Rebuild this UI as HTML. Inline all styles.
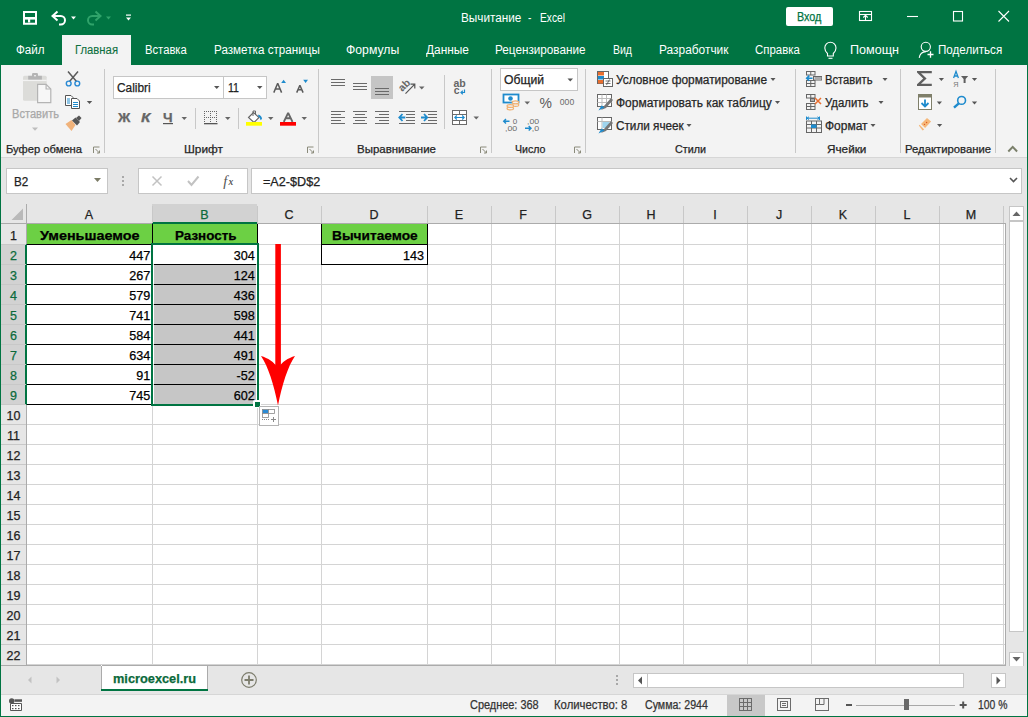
<!DOCTYPE html>
<html><head><meta charset="utf-8">
<style>
*{margin:0;padding:0;box-sizing:border-box}
html,body{width:1028px;height:717px;overflow:hidden;background:#fff;font-family:"Liberation Sans",sans-serif}
.a{position:absolute}
#title{left:0;top:0;width:1028px;height:35px;background:#007442}
#tabs{left:0;top:35px;width:1028px;height:30px;background:#007442}
#ribbon{left:1px;top:65px;width:1026px;height:93px;background:#f3f3f3;border-bottom:1px solid #d6d6d6}
#fbar{left:1px;top:158px;width:1026px;height:46px;background:#e6e6e6}
#colhdr{left:1px;top:204px;width:1004px;height:20px;background:#e6e6e6}
#grid{left:26px;top:224px;width:979px;height:441px;background:#fff}
#rowhdr{left:1px;top:224px;width:25px;height:441px;background:#e6e6e6}
#vsb{left:1005px;top:204px;width:22px;height:461px;background:#e6e6e6}
#sheets{left:1px;top:665px;width:1026px;height:29px;background:#e6e6e6}
#status{left:1px;top:694px;width:1026px;height:22px;background:#f3f3f3}
.lb{left:0;top:35px;width:1px;height:682px;background:#007442}
.rb{left:1027px;top:35px;width:1px;height:682px;background:#007442}
.bb{left:0;top:716px;width:1028px;height:1px;background:#007442}
.t{position:absolute;white-space:nowrap;line-height:1;-webkit-text-stroke:0.25px currentColor}
.w{color:#fff;font-size:12.5px}
</style></head><body>
<div id="title" class="a"></div>
<div id="tabs" class="a"></div>
<div id="ribbon" class="a"></div>
<div id="fbar" class="a"></div>
<div id="colhdr" class="a"></div>
<div id="rowhdr" class="a"></div>
<div id="grid" class="a"></div>
<div id="vsb" class="a"></div>
<div id="sheets" class="a"></div>
<div id="status" class="a"></div>


<!-- formula bar -->
<svg class="a" style="left:0;top:157px" width="1028" height="47" shape-rendering="crispEdges">
 <rect x="6.5" y="11.5" width="101" height="25" fill="#fff" stroke="#c6c6c6"></rect>
 <rect x="138.5" y="11.5" width="109" height="25" fill="#fff" stroke="#c6c6c6"></rect>
 <rect x="251.5" y="11.5" width="770" height="25" fill="#fff" stroke="#c6c6c6"></rect>
 <g fill="#a8a8a8"><rect x="122" y="19" width="2" height="2"></rect><rect x="122" y="23" width="2" height="2"></rect><rect x="122" y="27" width="2" height="2"></rect></g>
</svg>
<svg class="a" style="left:0;top:157px" width="1028" height="47">
 <path d="M94 21h7l-3.5 4z" fill="#7b7b66"></path>
 <path d="M152.5 19.5l9 9M161.5 19.5l-9 9" stroke="#c2c2c2" stroke-width="1.5" fill="none"></path>
 <path d="M188 24l3.5 4 7-8.5" stroke="#c2c2c2" stroke-width="2" fill="none"></path>
 <path d="M1010 21l3.5 3.5 3.5-3.5" stroke="#555" stroke-width="1.6" fill="none"></path>
 <text x="223.3" y="29" font-family="Liberation Serif" font-style="italic" font-size="14.5" fill="#555">f</text>
 <text x="228.6" y="28" font-family="Liberation Serif" font-style="italic" font-weight="bold" font-size="9.5" fill="#555">x</text>
</svg>
<span class="t" style="left: 13.6px; --b: 185.6px; --w: 14.3px; font-size: 12.5px; color: rgb(34, 34, 34); top: 175.6px; transform: scaleX(0.9348); transform-origin: 0px 0px;">B2</span>
<span class="t" style="left: 263.4px; --b: 185.6px; --w: 57.2px; font-size: 12.5px; color: rgb(34, 34, 34); top: 175.6px; transform: scaleX(1.0099); transform-origin: 0px 0px;">=A2-$D$2</span>

<svg class="a" style="left:0;top:0" width="1028" height="717" shape-rendering="crispEdges">
<rect x="1" y="204" width="1004" height="19" fill="#e6e6e6"></rect>
<rect x="152" y="204" width="105" height="19" fill="#d2d2d2"></rect>
<rect x="1" y="224" width="25" height="441" fill="#e6e6e6"></rect>
<rect x="1" y="244" width="24" height="160" fill="#d2d2d2"></rect>
<rect x="1" y="223" width="1004" height="1" fill="#ababab"></rect>
<rect x="152" y="222" width="105" height="2" fill="#007442"></rect>
<rect x="26" y="204" width="1" height="461" fill="#ababab"></rect>
<rect x="25" y="244" width="2" height="161" fill="#007442"></rect>
<rect x="152" y="206" width="1" height="17" fill="#c8c8c8"></rect>
<rect x="257" y="206" width="1" height="17" fill="#c8c8c8"></rect>
<rect x="321" y="206" width="1" height="17" fill="#c8c8c8"></rect>
<rect x="427" y="206" width="1" height="17" fill="#c8c8c8"></rect>
<rect x="491" y="206" width="1" height="17" fill="#c8c8c8"></rect>
<rect x="555" y="206" width="1" height="17" fill="#c8c8c8"></rect>
<rect x="619" y="206" width="1" height="17" fill="#c8c8c8"></rect>
<rect x="683" y="206" width="1" height="17" fill="#c8c8c8"></rect>
<rect x="747" y="206" width="1" height="17" fill="#c8c8c8"></rect>
<rect x="811" y="206" width="1" height="17" fill="#c8c8c8"></rect>
<rect x="875" y="206" width="1" height="17" fill="#c8c8c8"></rect>
<rect x="939" y="206" width="1" height="17" fill="#c8c8c8"></rect>
<rect x="1003" y="206" width="1" height="17" fill="#c8c8c8"></rect>
<rect x="1" y="244" width="25" height="1" fill="#c8c8c8"></rect>
<rect x="1" y="264" width="25" height="1" fill="#c8c8c8"></rect>
<rect x="1" y="284" width="25" height="1" fill="#c8c8c8"></rect>
<rect x="1" y="304" width="25" height="1" fill="#c8c8c8"></rect>
<rect x="1" y="324" width="25" height="1" fill="#c8c8c8"></rect>
<rect x="1" y="344" width="25" height="1" fill="#c8c8c8"></rect>
<rect x="1" y="364" width="25" height="1" fill="#c8c8c8"></rect>
<rect x="1" y="384" width="25" height="1" fill="#c8c8c8"></rect>
<rect x="1" y="404" width="25" height="1" fill="#c8c8c8"></rect>
<rect x="1" y="424" width="25" height="1" fill="#c8c8c8"></rect>
<rect x="1" y="444" width="25" height="1" fill="#c8c8c8"></rect>
<rect x="1" y="464" width="25" height="1" fill="#c8c8c8"></rect>
<rect x="1" y="484" width="25" height="1" fill="#c8c8c8"></rect>
<rect x="1" y="504" width="25" height="1" fill="#c8c8c8"></rect>
<rect x="1" y="524" width="25" height="1" fill="#c8c8c8"></rect>
<rect x="1" y="544" width="25" height="1" fill="#c8c8c8"></rect>
<rect x="1" y="564" width="25" height="1" fill="#c8c8c8"></rect>
<rect x="1" y="584" width="25" height="1" fill="#c8c8c8"></rect>
<rect x="1" y="604" width="25" height="1" fill="#c8c8c8"></rect>
<rect x="1" y="624" width="25" height="1" fill="#c8c8c8"></rect>
<rect x="1" y="644" width="25" height="1" fill="#c8c8c8"></rect>
<rect x="152" y="224" width="1" height="441" fill="#d4d4d4"></rect>
<rect x="257" y="224" width="1" height="441" fill="#d4d4d4"></rect>
<rect x="321" y="224" width="1" height="441" fill="#d4d4d4"></rect>
<rect x="427" y="224" width="1" height="441" fill="#d4d4d4"></rect>
<rect x="491" y="224" width="1" height="441" fill="#d4d4d4"></rect>
<rect x="555" y="224" width="1" height="441" fill="#d4d4d4"></rect>
<rect x="619" y="224" width="1" height="441" fill="#d4d4d4"></rect>
<rect x="683" y="224" width="1" height="441" fill="#d4d4d4"></rect>
<rect x="747" y="224" width="1" height="441" fill="#d4d4d4"></rect>
<rect x="811" y="224" width="1" height="441" fill="#d4d4d4"></rect>
<rect x="875" y="224" width="1" height="441" fill="#d4d4d4"></rect>
<rect x="939" y="224" width="1" height="441" fill="#d4d4d4"></rect>
<rect x="1003" y="224" width="1" height="441" fill="#d4d4d4"></rect>
<rect x="27" y="244" width="978" height="1" fill="#d4d4d4"></rect>
<rect x="27" y="264" width="978" height="1" fill="#d4d4d4"></rect>
<rect x="27" y="284" width="978" height="1" fill="#d4d4d4"></rect>
<rect x="27" y="304" width="978" height="1" fill="#d4d4d4"></rect>
<rect x="27" y="324" width="978" height="1" fill="#d4d4d4"></rect>
<rect x="27" y="344" width="978" height="1" fill="#d4d4d4"></rect>
<rect x="27" y="364" width="978" height="1" fill="#d4d4d4"></rect>
<rect x="27" y="384" width="978" height="1" fill="#d4d4d4"></rect>
<rect x="27" y="404" width="978" height="1" fill="#d4d4d4"></rect>
<rect x="27" y="424" width="978" height="1" fill="#d4d4d4"></rect>
<rect x="27" y="444" width="978" height="1" fill="#d4d4d4"></rect>
<rect x="27" y="464" width="978" height="1" fill="#d4d4d4"></rect>
<rect x="27" y="484" width="978" height="1" fill="#d4d4d4"></rect>
<rect x="27" y="504" width="978" height="1" fill="#d4d4d4"></rect>
<rect x="27" y="524" width="978" height="1" fill="#d4d4d4"></rect>
<rect x="27" y="544" width="978" height="1" fill="#d4d4d4"></rect>
<rect x="27" y="564" width="978" height="1" fill="#d4d4d4"></rect>
<rect x="27" y="584" width="978" height="1" fill="#d4d4d4"></rect>
<rect x="27" y="604" width="978" height="1" fill="#d4d4d4"></rect>
<rect x="27" y="624" width="978" height="1" fill="#d4d4d4"></rect>
<rect x="27" y="644" width="978" height="1" fill="#d4d4d4"></rect>
<rect x="27" y="664" width="978" height="1" fill="#d4d4d4"></rect>
<rect x="1005" y="223" width="1" height="443" fill="#ababab"></rect>
<rect x="1" y="665" width="1005" height="1" fill="#ababab"></rect>
<rect x="27" y="224" width="125" height="20" fill="#6cd044"></rect>
<rect x="153" y="224" width="104" height="20" fill="#6cd044"></rect>
<rect x="322" y="224" width="105" height="20" fill="#6cd044"></rect>
<rect x="154" y="265" width="102" height="139" fill="#c6c6c6"></rect>
<rect x="27" y="244" width="125" height="1" fill="#000"></rect>
<rect x="27" y="264" width="124" height="1" fill="#000"></rect><rect x="154" y="264" width="102" height="1" fill="#000"></rect>
<rect x="27" y="284" width="124" height="1" fill="#000"></rect><rect x="154" y="284" width="102" height="1" fill="#000"></rect>
<rect x="27" y="304" width="124" height="1" fill="#000"></rect><rect x="154" y="304" width="102" height="1" fill="#000"></rect>
<rect x="27" y="324" width="124" height="1" fill="#000"></rect><rect x="154" y="324" width="102" height="1" fill="#000"></rect>
<rect x="27" y="344" width="124" height="1" fill="#000"></rect><rect x="154" y="344" width="102" height="1" fill="#000"></rect>
<rect x="27" y="364" width="124" height="1" fill="#000"></rect><rect x="154" y="364" width="102" height="1" fill="#000"></rect>
<rect x="27" y="384" width="124" height="1" fill="#000"></rect><rect x="154" y="384" width="102" height="1" fill="#000"></rect>
<rect x="27" y="404" width="124" height="1" fill="#000"></rect><rect x="154" y="404" width="102" height="1" fill="#000"></rect>
<rect x="152" y="224" width="1" height="181" fill="#000"></rect>
<rect x="257" y="224" width="1" height="181" fill="#000"></rect>

<rect x="321" y="244" width="107" height="1" fill="#000"></rect>
<rect x="321" y="264" width="107" height="1" fill="#000"></rect>
<rect x="321" y="224" width="1" height="41" fill="#000"></rect>
<rect x="427" y="224" width="1" height="41" fill="#000"></rect>
<rect x="151" y="243" width="108" height="2" fill="#007442"></rect>
<rect x="151" y="404" width="102" height="2" fill="#007442"></rect>
<rect x="151" y="243" width="2" height="163" fill="#007442"></rect>
<rect x="257" y="243" width="2" height="157" fill="#007442"></rect>
<rect x="253" y="400" width="8" height="8" fill="#fff"></rect>
<rect x="255" y="402" width="5" height="5" fill="#007442"></rect>
</svg>
<svg class="a" style="left:0;top:0" width="1028" height="717">
<path d="M11.5 220h11.5v-11.5z" fill="#b9b9b9"></path>
</svg>
<span class="t" style="left: 26px; width: 126px; text-align: center; --b: 219.3px; font-size: 12.5px; color: rgb(34, 34, 34); top: 209.3px;">A</span>
<span class="t" style="left: 152px; width: 105px; text-align: center; --b: 219.3px; font-size: 12.5px; color: rgb(11, 106, 59); top: 209.3px;">B</span>
<span class="t" style="left: 257px; width: 64px; text-align: center; --b: 219.3px; font-size: 12.5px; color: rgb(34, 34, 34); top: 209.3px;">C</span>
<span class="t" style="left: 321px; width: 106px; text-align: center; --b: 219.3px; font-size: 12.5px; color: rgb(34, 34, 34); top: 209.3px;">D</span>
<span class="t" style="left: 427px; width: 64px; text-align: center; --b: 219.3px; font-size: 12.5px; color: rgb(34, 34, 34); top: 209.3px;">E</span>
<span class="t" style="left: 491px; width: 64px; text-align: center; --b: 219.3px; font-size: 12.5px; color: rgb(34, 34, 34); top: 209.3px;">F</span>
<span class="t" style="left: 555px; width: 64px; text-align: center; --b: 219.3px; font-size: 12.5px; color: rgb(34, 34, 34); top: 209.3px;">G</span>
<span class="t" style="left: 619px; width: 64px; text-align: center; --b: 219.3px; font-size: 12.5px; color: rgb(34, 34, 34); top: 209.3px;">H</span>
<span class="t" style="left: 683px; width: 64px; text-align: center; --b: 219.3px; font-size: 12.5px; color: rgb(34, 34, 34); top: 209.3px;">I</span>
<span class="t" style="left: 747px; width: 64px; text-align: center; --b: 219.3px; font-size: 12.5px; color: rgb(34, 34, 34); top: 209.3px;">J</span>
<span class="t" style="left: 811px; width: 64px; text-align: center; --b: 219.3px; font-size: 12.5px; color: rgb(34, 34, 34); top: 209.3px;">K</span>
<span class="t" style="left: 875px; width: 64px; text-align: center; --b: 219.3px; font-size: 12.5px; color: rgb(34, 34, 34); top: 209.3px;">L</span>
<span class="t" style="left: 939px; width: 64px; text-align: center; --b: 219.3px; font-size: 12.5px; color: rgb(34, 34, 34); top: 209.3px;">M</span>
<span class="t" style="left: 1px; width: 25px; text-align: center; --b: 239.5px; font-size: 12.5px; color: rgb(34, 34, 34); top: 229.5px;">1</span>
<span class="t" style="left: 1px; width: 25px; text-align: center; --b: 259.5px; font-size: 12.5px; color: rgb(11, 106, 59); top: 249.5px;">2</span>
<span class="t" style="left: 1px; width: 25px; text-align: center; --b: 279.5px; font-size: 12.5px; color: rgb(11, 106, 59); top: 269.5px;">3</span>
<span class="t" style="left: 1px; width: 25px; text-align: center; --b: 299.5px; font-size: 12.5px; color: rgb(11, 106, 59); top: 289.5px;">4</span>
<span class="t" style="left: 1px; width: 25px; text-align: center; --b: 319.5px; font-size: 12.5px; color: rgb(11, 106, 59); top: 309.5px;">5</span>
<span class="t" style="left: 1px; width: 25px; text-align: center; --b: 339.5px; font-size: 12.5px; color: rgb(11, 106, 59); top: 329.5px;">6</span>
<span class="t" style="left: 1px; width: 25px; text-align: center; --b: 359.5px; font-size: 12.5px; color: rgb(11, 106, 59); top: 349.5px;">7</span>
<span class="t" style="left: 1px; width: 25px; text-align: center; --b: 379.5px; font-size: 12.5px; color: rgb(11, 106, 59); top: 369.5px;">8</span>
<span class="t" style="left: 1px; width: 25px; text-align: center; --b: 399.5px; font-size: 12.5px; color: rgb(11, 106, 59); top: 389.5px;">9</span>
<span class="t" style="left: 1px; width: 25px; text-align: center; --b: 419.5px; font-size: 12.5px; color: rgb(34, 34, 34); top: 409.5px;">10</span>
<span class="t" style="left: 1px; width: 25px; text-align: center; --b: 439.5px; font-size: 12.5px; color: rgb(34, 34, 34); top: 429.5px;">11</span>
<span class="t" style="left: 1px; width: 25px; text-align: center; --b: 459.5px; font-size: 12.5px; color: rgb(34, 34, 34); top: 449.5px;">12</span>
<span class="t" style="left: 1px; width: 25px; text-align: center; --b: 479.5px; font-size: 12.5px; color: rgb(34, 34, 34); top: 469.5px;">13</span>
<span class="t" style="left: 1px; width: 25px; text-align: center; --b: 499.5px; font-size: 12.5px; color: rgb(34, 34, 34); top: 489.5px;">14</span>
<span class="t" style="left: 1px; width: 25px; text-align: center; --b: 519.5px; font-size: 12.5px; color: rgb(34, 34, 34); top: 509.5px;">15</span>
<span class="t" style="left: 1px; width: 25px; text-align: center; --b: 539.5px; font-size: 12.5px; color: rgb(34, 34, 34); top: 529.5px;">16</span>
<span class="t" style="left: 1px; width: 25px; text-align: center; --b: 559.5px; font-size: 12.5px; color: rgb(34, 34, 34); top: 549.5px;">17</span>
<span class="t" style="left: 1px; width: 25px; text-align: center; --b: 579.5px; font-size: 12.5px; color: rgb(34, 34, 34); top: 569.5px;">18</span>
<span class="t" style="left: 1px; width: 25px; text-align: center; --b: 599.5px; font-size: 12.5px; color: rgb(34, 34, 34); top: 589.5px;">19</span>
<span class="t" style="left: 1px; width: 25px; text-align: center; --b: 619.5px; font-size: 12.5px; color: rgb(34, 34, 34); top: 609.5px;">20</span>
<span class="t" style="left: 1px; width: 25px; text-align: center; --b: 639.5px; font-size: 12.5px; color: rgb(34, 34, 34); top: 629.5px;">21</span>
<span class="t" style="left: 1px; width: 25px; text-align: center; --b: 659.5px; font-size: 12.5px; color: rgb(34, 34, 34); top: 649.5px;">22</span>
<span class="t" style="left: 27px; width: 123.2px; text-align: right; --b: 260px; font-size: 12.6px; color: rgb(0, 0, 0); top: 250px;">447</span>
<span class="t" style="left: 153px; width: 101.8px; text-align: right; --b: 260px; font-size: 12.6px; color: rgb(0, 0, 0); top: 250px;">304</span>
<span class="t" style="left: 27px; width: 123.2px; text-align: right; --b: 280px; font-size: 12.6px; color: rgb(0, 0, 0); top: 270px;">267</span>
<span class="t" style="left: 153px; width: 101.8px; text-align: right; --b: 280px; font-size: 12.6px; color: rgb(0, 0, 0); top: 270px;">124</span>
<span class="t" style="left: 27px; width: 123.2px; text-align: right; --b: 300px; font-size: 12.6px; color: rgb(0, 0, 0); top: 290px;">579</span>
<span class="t" style="left: 153px; width: 101.8px; text-align: right; --b: 300px; font-size: 12.6px; color: rgb(0, 0, 0); top: 290px;">436</span>
<span class="t" style="left: 27px; width: 123.2px; text-align: right; --b: 320px; font-size: 12.6px; color: rgb(0, 0, 0); top: 310px;">741</span>
<span class="t" style="left: 153px; width: 101.8px; text-align: right; --b: 320px; font-size: 12.6px; color: rgb(0, 0, 0); top: 310px;">598</span>
<span class="t" style="left: 27px; width: 123.2px; text-align: right; --b: 340px; font-size: 12.6px; color: rgb(0, 0, 0); top: 330px;">584</span>
<span class="t" style="left: 153px; width: 101.8px; text-align: right; --b: 340px; font-size: 12.6px; color: rgb(0, 0, 0); top: 330px;">441</span>
<span class="t" style="left: 27px; width: 123.2px; text-align: right; --b: 360px; font-size: 12.6px; color: rgb(0, 0, 0); top: 350px;">634</span>
<span class="t" style="left: 153px; width: 101.8px; text-align: right; --b: 360px; font-size: 12.6px; color: rgb(0, 0, 0); top: 350px;">491</span>
<span class="t" style="left: 27px; width: 123.2px; text-align: right; --b: 380px; font-size: 12.6px; color: rgb(0, 0, 0); top: 370px;">91</span>
<span class="t" style="left: 153px; width: 101.8px; text-align: right; --b: 380px; font-size: 12.6px; color: rgb(0, 0, 0); top: 370px;">-52</span>
<span class="t" style="left: 27px; width: 123.2px; text-align: right; --b: 400px; font-size: 12.6px; color: rgb(0, 0, 0); top: 390px;">745</span>
<span class="t" style="left: 153px; width: 101.8px; text-align: right; --b: 400px; font-size: 12.6px; color: rgb(0, 0, 0); top: 390px;">602</span>
<span class="t" style="left: 322px; width: 102px; text-align: right; --b: 260px; font-size: 12.6px; color: rgb(0, 0, 0); top: 250px;">143</span>
<span class="t" style="left: 39.7px; --w: 99.6px; --b: 240px; font-size: 13.5px; color: rgb(0, 0, 0); font-weight: bold; top: 229px; transform: scaleX(1.0672); transform-origin: 0px 0px;">Уменьшаемое</span>
<span class="t" style="left: 175px; --w: 61.5px; --b: 240px; font-size: 13.5px; color: rgb(0, 0, 0); font-weight: bold; top: 229px; transform: scaleX(0.9942); transform-origin: 0px 0px;">Разность</span>
<span class="t" style="left: 332px; --w: 85.7px; --b: 240px; font-size: 13.5px; color: rgb(0, 0, 0); font-weight: bold; top: 229px; transform: scaleX(1.015); transform-origin: 0px 0px;">Вычитаемое</span>

<!-- arrow & quick analysis -->
<svg class="a" style="left:0;top:0" width="1028" height="717">
 <rect x="275.3" y="244" width="5.6" height="136" fill="#ff0000"></rect>
 <path d="M278 405.5C274 385 268 366 261 356C268 358 274 362 278 368C282 362 288 358 295 356C288 366 282 385 278 405.5z" fill="#ff0000"></path>
 <rect x="259.5" y="406.5" width="19" height="19" fill="#fff" stroke="#b4b4b4"></rect>
 <rect x="262.5" y="409.5" width="6" height="4" fill="#2a8ad4" stroke="#8a8a8a" stroke-width="0.8"></rect>
 <rect x="268.5" y="409.5" width="6" height="4" fill="#fff" stroke="#8a8a8a" stroke-width="0.8"></rect>
 <rect x="262.5" y="413.5" width="6" height="4" fill="#fff" stroke="#8a8a8a" stroke-width="0.8"></rect>
 <path d="M262 419.5h7" stroke="#8a8a8a" stroke-dasharray="1 1" stroke-width="1"></path>
 <path d="M271 419.5h5M273.5 417v5" stroke="#8a8a8a" stroke-width="1"></path>
</svg>
<!-- scrollbars, sheet tabs, status -->
<svg class="a" style="left:0;top:0" width="1028" height="717" shape-rendering="crispEdges">
 <rect x="1006" y="204" width="21" height="461" fill="#e6e6e6"></rect>
 <rect x="1009.5" y="206.5" width="14" height="14" fill="#fff" stroke="#c6c6c6"></rect>
 <rect x="1009.5" y="221.5" width="14" height="410" fill="#fff" stroke="#c6c6c6"></rect>
 <rect x="1009.5" y="652.5" width="14" height="14" fill="#fff" stroke="#c6c6c6"></rect>
 <rect x="1" y="666" width="1026" height="28" fill="#e6e6e6"></rect>
 <rect x="1" y="694" width="1026" height="1" fill="#d6d6d6"></rect>
 <rect x="1" y="695" width="1026" height="21" fill="#f3f3f3"></rect>
 <path d="M101.5 691V665.5H207.5V691" fill="#fff" stroke="#ababab"></path>
 <rect x="101" y="665" width="1" height="1" fill="#fff"></rect>
 <rect x="101" y="689" width="107" height="2" fill="#007442"></rect>
 <rect x="633.5" y="673.5" width="14" height="14" fill="#fff" stroke="#c6c6c6"></rect>
 <rect x="647.5" y="673.5" width="316" height="14" fill="#fff" stroke="#c6c6c6"></rect>
 <rect x="991.5" y="673.5" width="14" height="14" fill="#fff" stroke="#c6c6c6"></rect>
 <g fill="#a8a8a8"><rect x="616" y="675" width="2" height="2"></rect><rect x="616" y="679" width="2" height="2"></rect><rect x="616" y="683" width="2" height="2"></rect></g>
 <rect x="727" y="695" width="38" height="21" fill="#c8c8c8"></rect>
 <rect x="0" y="716" width="1028" height="1" fill="#007442"></rect>
</svg>
<svg class="a" style="left:0;top:0" width="1028" height="717">
 <path d="M1012.5 216h8l-4-4.5z" fill="#666"></path>
 <path d="M1012.5 657h8l-4 4.5z" fill="#666"></path>
 <path d="M638 680.5l4-4v8z" fill="#555"></path>
 <path d="M1000.5 680.5l-4-4v8z" fill="#555"></path>
 <path d="M31.5 676.5l-3.5 3.5 3.5 3.5z" fill="#c2c2c2"></path>
 <path d="M56.5 676.5l3.5 3.5-3.5 3.5z" fill="#c2c2c2"></path>
 <circle cx="249" cy="680" r="7.3" fill="none" stroke="#7d7d6d" stroke-width="1.2"></circle>
 <path d="M249 675.5v9M244.5 680h9" stroke="#7d7d6d" stroke-width="1.8"></path>
 <circle cx="11.7" cy="701" r="2.7" fill="#555"></circle>
 <path d="M10.5 703.5h11v7h-11z" fill="#fff" stroke="#555" stroke-width="1"></path>
 <rect x="14.5" y="699.3" width="7.5" height="2.5" fill="#555"></rect>
 <g fill="#555"><rect x="12" y="705" width="1.5" height="1.2"></rect><rect x="15" y="705" width="1.5" height="1.2"></rect><rect x="18" y="705" width="1.5" height="1.2"></rect><rect x="12" y="708" width="1.5" height="1.2"></rect><rect x="15" y="708" width="1.5" height="1.2"></rect><rect x="18" y="708" width="1.5" height="1.2"></rect></g>
 <g fill="none" stroke="#6b6b6b" stroke-width="1">
  <rect x="739.5" y="698.5" width="12" height="12"></rect><path d="M739.5 702.5h12M739.5 706.5h12M743.5 698.5v12M747.5 698.5v12"></path>
  <rect x="777.5" y="698.5" width="13" height="12"></rect><rect x="780.5" y="701.5" width="7" height="6"></rect><path d="M782 703.5h4M782 705.5h4"></path>
  <rect x="815.5" y="698.5" width="13" height="12"></rect><path d="M819.5 698.5v6h4.5v-6M815.5 704.5h4"></path>
 </g>
 <rect x="846" y="704" width="6" height="2" fill="#555"></rect>
 <rect x="856" y="705" width="99" height="1" fill="#a8a8a8"></rect>
 <rect x="904" y="699" width="5" height="11" fill="#6a6a6a"></rect>
 <rect x="959.7" y="704" width="7" height="2" fill="#555"></rect><rect x="962.2" y="701.5" width="2" height="7" fill="#555"></rect>
</svg>
<span class="t" style="left: 112.8px; --b: 683.4px; --w: 83.1px; font-size: 13px; color: rgb(11, 106, 59); font-weight: bold; top: 672.4px; transform: scaleX(0.9829); transform-origin: 0px 0px;">microexcel.ru</span>
<span class="t" style="left: 469.6px; --b: 709.2px; --w: 68.6px; font-size: 12px; color: rgb(51, 51, 51); top: 699.2px; transform: scaleX(0.9096); transform-origin: 0px 0px;">Среднее: 368</span>
<span class="t" style="left: 554.2px; --b: 709.2px; --w: 73.4px; font-size: 12px; color: rgb(51, 51, 51); top: 699.2px; transform: scaleX(0.9435); transform-origin: 0px 0px;">Количество: 8</span>
<span class="t" style="left: 644.5px; --b: 709.2px; --w: 62.9px; font-size: 12px; color: rgb(51, 51, 51); top: 699.2px; transform: scaleX(0.8849); transform-origin: 0px 0px;">Сумма: 2944</span>
<span class="t" style="left: 978.2px; --b: 709.2px; --w: 29.4px; font-size: 12px; color: rgb(51, 51, 51); top: 699.2px; transform: scaleX(0.8639); transform-origin: 0px 0px;">100 %</span>

<!-- ribbon -->
<svg class="a" style="left:0;top:0" width="1028" height="160">
 <!-- separators -->
 <g fill="#c8c8c8">
  <rect x="104" y="69" width="1" height="84"></rect>
  <rect x="318" y="69" width="1" height="84"></rect>
  <rect x="491" y="69" width="1" height="84"></rect>
  <rect x="585" y="69" width="1" height="84"></rect>
  <rect x="795" y="69" width="1" height="84"></rect>
  <rect x="900" y="69" width="1" height="84"></rect>
  <rect x="995" y="69" width="1" height="84"></rect>
  <rect x="195" y="108" width="1" height="21"></rect>
  <rect x="238" y="108" width="1" height="21"></rect>
  <rect x="444" y="75" width="1" height="54"></rect>
 </g>
 <!-- launchers -->
 <g fill="none" stroke="#8a8a7a" stroke-width="1">
  <path d="M93.5 153v-6h6"></path><path d="M95.5 149l4 4M99.5 150.5v2.5h-2.5"></path>
  <path d="M307.5 153v-6h6"></path><path d="M309.5 149l4 4M313.5 150.5v2.5h-2.5"></path>
  <path d="M480.5 153v-6h6"></path><path d="M482.5 149l4 4M486.5 150.5v2.5h-2.5"></path>
  <path d="M574.5 153v-6h6"></path><path d="M576.5 149l4 4M580.5 150.5v2.5h-2.5"></path>
 </g>
 <!-- collapse ribbon -->
 <path d="M1008.3 151.5l4.4-4.6 4.4 4.6" fill="none" stroke="#7a7f6a" stroke-width="2"></path>
 <!-- paste (disabled) -->
 <rect x="23" y="75.8" width="23.7" height="25" rx="1.5" fill="#dcdcd9"></rect>
 <rect x="28.2" y="75.8" width="13.7" height="4" fill="#b5b5b5"></rect>
 <rect x="32" y="73" width="6" height="3.5" rx="1.2" fill="#b5b5b5"></rect>
 <rect x="34.2" y="75" width="1.6" height="1.4" fill="#f3f3f3"></rect>
 <rect x="23" y="79.8" width="23.7" height="1.3" fill="#f3f3f3"></rect>
 <path d="M37.6 84.3h8.5l4.7 4.7v13.6h-13.2z" fill="#f7f7f7" stroke="#b4b4b4" stroke-width="1.2"></path>
 <path d="M46.1 84.3v4.7h4.7" fill="none" stroke="#b4b4b4" stroke-width="1.2"></path>
 <path d="M32 127.5h6l-3 3.2z" fill="#bdbdbd"></path>
 <!-- scissors -->
 <g fill="none" stroke="#5a5a5a" stroke-width="1.5"><path d="M68 71.5l8.5 10M78 71.5l-8.5 10"></path></g>
 <g fill="none" stroke="#2a8ad4" stroke-width="1.4"><circle cx="68.7" cy="83.5" r="2.4"></circle><circle cx="77.3" cy="83.5" r="2.4"></circle></g>
 <!-- copy -->
 <path d="M65.5 95.5h5.5l2 2v8h-7.5z" fill="#fff" stroke="#555" stroke-width="1"></path>
 <path d="M71.5 98.5h5.5l2.5 2.5v7.5h-8z" fill="#fff" stroke="#555" stroke-width="1"></path>
 <g fill="#1e8bcd"><rect x="67" y="98.5" width="3" height="1"></rect><rect x="67" y="100.5" width="3" height="1"></rect><rect x="67" y="102.5" width="3" height="1"></rect><rect x="73" y="102" width="5" height="1"></rect><rect x="73" y="104" width="5" height="1"></rect><rect x="73" y="106" width="5" height="1"></rect></g>
 <path d="M86.8 101h5.4l-2.7 3z" fill="#555"></path>
 <!-- format painter -->
 <path d="M65.5 124l6-4 4 5-4 6z" fill="#f0b27a"></path>
 <path d="M72 120.5l3.5-3 4.5 4.5-3 3.5z" fill="#555"></path>
 <path d="M76 118l3-2.5 2.5 2.5-2.5 3z" fill="#555"></path>
 <!-- font boxes -->
 <rect x="113.5" y="76.5" width="110" height="22" fill="#fff" stroke="#c6c6c6"></rect>
 <rect x="223.5" y="76.5" width="43" height="22" fill="#fff" stroke="#c6c6c6"></rect>
 <path d="M214 86h5.5l-2.75 3z" fill="#555"></path>
 <path d="M257 86h5.5l-2.75 3z" fill="#555"></path>
 <path d="M281.2 82.9h4.8l-2.4-3.1z" fill="#1e8bcd"></path>
 <path d="M273.8 92.6l3.9-9.4 3.9 9.4M275.3 89h4.8" fill="none" stroke="#5a5a5a" stroke-width="1.5" stroke-linejoin="bevel"></path>
 <path d="M303.2 79.8h4.8l-2.4 3.1z" fill="#1e8bcd"></path>
 <path d="M296.7 92.6l3.2-7.4 3.2 7.4M297.9 89.8h4" fill="none" stroke="#5a5a5a" stroke-width="1.5" stroke-linejoin="bevel"></path>
 <!-- BIU arrows -->
 <path d="M181.5 117h5.5l-2.75 3z" fill="#666"></path>
 <rect x="163" y="123" width="10" height="1.2" fill="#555"></rect>
 <!-- borders icon -->
 <g fill="#666">
  <path d="M204 111h1v1h-1zM206 111h1v1h-1zM208 111h1v1h-1zM210 111h1v1h-1zM212 111h1v1h-1zM214 111h1v1h-1zM216 111h1v1h-1z"></path>
  <path d="M204 117h1v1h-1zM206 117h1v1h-1zM208 117h1v1h-1zM210 117h1v1h-1zM212 117h1v1h-1zM214 117h1v1h-1zM216 117h1v1h-1z"></path>
  <path d="M204 113h1v1h-1zM204 115h1v1h-1zM204 119h1v1h-1zM204 121h1v1h-1zM210 113h1v1h-1zM210 115h1v1h-1zM210 119h1v1h-1zM210 121h1v1h-1zM216 113h1v1h-1zM216 115h1v1h-1zM216 119h1v1h-1zM216 121h1v1h-1z"></path>
 </g>
 <rect x="204" y="123" width="13.5" height="1.3" fill="#555"></rect>
 <path d="M225 117h5.5l-2.75 3z" fill="#666"></path>
 <!-- fill color -->
 <path d="M248.5 117.5l5-5 5.5 5-5 5z" fill="#fff" stroke="#666" stroke-width="1.1"></path>
 <path d="M253 116v-5h2.5v4" fill="none" stroke="#666" stroke-width="1"></path>
 <path d="M258.5 114.5c2 0.8 3.5 2.5 3.5 4.5l-1.5 1.3c0-1.5-1-3-2.5-4z" fill="#1e8bcd"></path>
 <rect x="246" y="122" width="16" height="3.7" fill="#ffff00"></rect>
 <path d="M268 117h5.5l-2.75 3z" fill="#666"></path>
 <!-- font color -->
 <path d="M283.8 121.8l4.35-9 4.35 9M285.6 118.3h5.1" fill="none" stroke="#666" stroke-width="1.9" stroke-linejoin="bevel"></path>
 <rect x="280" y="122" width="16" height="3.7" fill="#ff0000"></rect>
 <path d="M301.5 117h5.5l-2.75 3z" fill="#666"></path>
 <!-- alignment -->
 <g fill="#6a6a6a">
  <rect x="331" y="79" width="14" height="1"></rect><rect x="331" y="82" width="14" height="1"></rect><rect x="331" y="85" width="14" height="1"></rect>
  <rect x="353" y="83" width="14" height="1"></rect><rect x="353" y="86" width="14" height="1"></rect><rect x="353" y="89" width="14" height="1"></rect>
 </g>
 <rect x="371" y="76" width="22" height="23" fill="#c5c5c5"></rect>
 <g fill="#6a6a6a">
  <rect x="375" y="88" width="14" height="1"></rect><rect x="375" y="91" width="14" height="1"></rect><rect x="375" y="94" width="14" height="1"></rect>
 </g>
 <g fill="#6a6a6a">
  <rect x="331" y="111" width="14" height="1"></rect><rect x="331" y="114" width="10" height="1"></rect><rect x="331" y="117" width="14" height="1"></rect><rect x="331" y="120" width="10" height="1"></rect><rect x="331" y="123" width="14" height="1"></rect>
  <rect x="353" y="111" width="14" height="1"></rect><rect x="355" y="114" width="10" height="1"></rect><rect x="353" y="117" width="14" height="1"></rect><rect x="355" y="120" width="10" height="1"></rect><rect x="353" y="123" width="14" height="1"></rect>
  <rect x="375" y="111" width="14" height="1"></rect><rect x="379" y="114" width="10" height="1"></rect><rect x="375" y="117" width="14" height="1"></rect><rect x="379" y="120" width="10" height="1"></rect><rect x="375" y="123" width="14" height="1"></rect>
  <rect x="399" y="111" width="16" height="1"></rect><rect x="406" y="114" width="9" height="1"></rect><rect x="406" y="117" width="9" height="1"></rect><rect x="406" y="120" width="9" height="1"></rect><rect x="399" y="123" width="16" height="1"></rect>
  <rect x="421" y="111" width="16" height="1"></rect><rect x="428" y="114" width="9" height="1"></rect><rect x="428" y="117" width="9" height="1"></rect><rect x="428" y="120" width="9" height="1"></rect><rect x="421" y="123" width="16" height="1"></rect>
 </g>
 <path d="M402.5 114l-3.2 3.5 3.2 3.5M399.8 117.5h5.5" fill="none" stroke="#1e8bcd" stroke-width="1.8"></path>
 <path d="M424 114l3.2 3.5-3.2 3.5M421 117.5h5.5" fill="none" stroke="#1e8bcd" stroke-width="1.8"></path>
 <!-- orientation -->
 <text x="399" y="92" font-family="Liberation Sans" font-size="10.5" font-weight="bold" fill="#666" transform="translate(2 -1) rotate(-45 401 91)">ab</text>
 <path d="M405.5 93.7l9.3-9.5M410.5 84.2h4.3v4.3" fill="none" stroke="#555" stroke-width="1.2"></path>
 <path d="M419 86.5h5.5l-2.75 3z" fill="#666"></path>
 <!-- wrap text -->
 <text x="453.5" y="86.6" font-family="Liberation Sans" font-size="10.5" font-weight="bold" fill="#666" textLength="12.3" lengthAdjust="spacingAndGlyphs">ab</text>
 <text x="453.8" y="93.6" font-family="Liberation Sans" font-size="10.5" font-weight="bold" fill="#666">c</text>
 <path d="M464.5 89.5v3h-3.5M462.8 90.8l-1.8 1.7 1.8 1.7" fill="none" stroke="#1e8bcd" stroke-width="1.2"></path>
 <!-- merge -->
 <rect x="452.5" y="110.5" width="14" height="14" fill="#fff" stroke="#6a6a6a"></rect>
 <path d="M452.5 114.5h14M452.5 120.5h14M459.5 110.5v4M459.5 120.5v4" stroke="#6a6a6a" fill="none"></path>
 <path d="M455 117.5h9M456.8 115.5l-2 2 2 2M462.2 115.5l2 2-2 2" stroke="#1e8bcd" fill="none" stroke-width="1.1"></path>
 <path d="M473.5 116.5h5.5l-2.75 3z" fill="#666"></path>
 <!-- number -->
 <rect x="500.5" y="68.5" width="77" height="22" fill="#fff" stroke="#c6c6c6"></rect>
 <path d="M567.5 78.5h5.5l-2.75 3z" fill="#555"></path>
 <rect x="503.5" y="94.5" width="15" height="8" fill="#fff" stroke="#1e8bcd" stroke-width="1.8"></rect>
 <circle cx="510.5" cy="98.5" r="2.3" fill="#1e8bcd"></circle>
 <g fill="#f3f3f3" stroke="#f0b070" stroke-width="1.1">
  <ellipse cx="515.5" cy="105" rx="3.3" ry="1.4"></ellipse><ellipse cx="515.5" cy="102.3" rx="3.3" ry="1.4"></ellipse>
  <ellipse cx="510.3" cy="108.5" rx="3.3" ry="1.4"></ellipse><ellipse cx="510.3" cy="106" rx="3.3" ry="1.4"></ellipse>
 </g>
 <path d="M524.5 101.5h5.5l-2.75 3z" fill="#666"></path>
 <text x="539.5" y="107.7" font-family="Liberation Sans" font-size="14.5" fill="#5a5a5a" textLength="12.4" lengthAdjust="spacingAndGlyphs">%</text>
 <text x="559.8" y="104.6" font-family="Liberation Sans" font-size="9" fill="#6a6a6a" textLength="14.4" lengthAdjust="spacingAndGlyphs">000</text>
 <text x="512.8" y="123.5" font-family="Liberation Sans" font-size="7.5" fill="#6a6a6a" textLength="4.5" lengthAdjust="spacingAndGlyphs">0</text>
 <text x="505" y="130.9" font-family="Liberation Sans" font-size="7.5" fill="#6a6a6a" textLength="12.3" lengthAdjust="spacingAndGlyphs">,00</text>
 <path d="M503.5 121.3h6M506 119l-2.3 2.3 2.3 2.3" stroke="#1e8bcd" fill="none" stroke-width="1.4"></path>
 <text x="527" y="123.5" font-family="Liberation Sans" font-size="7.5" fill="#6a6a6a" textLength="12.2" lengthAdjust="spacingAndGlyphs">,00</text>
 <text x="531.8" y="130.9" font-family="Liberation Sans" font-size="7.5" fill="#6a6a6a" textLength="7.4" lengthAdjust="spacingAndGlyphs">,0</text>
 <path d="M525 128.3h6M528.7 126l2.3 2.3-2.3 2.3" stroke="#1e8bcd" fill="none" stroke-width="1.4"></path>
 <!-- styles icons -->
 <rect x="597.5" y="71.5" width="11" height="12" fill="#fff" stroke="#666"></rect>
 <rect x="598" y="72" width="6" height="3.5" fill="#e86e2f"></rect>
 <rect x="598" y="76" width="6" height="3.5" fill="#1e8bcd"></rect>
 <rect x="598" y="80" width="6" height="3.5" fill="#e86e2f"></rect>
 <rect x="603.5" y="78.5" width="9" height="8" fill="#fff" stroke="#666"></rect>
 <path d="M605.5 81h5M605.5 83.5h5M609.5 79.5l-3 5.5" stroke="#555" fill="none" stroke-width="0.8"></path>
 <rect x="597.5" y="94.5" width="14" height="12" fill="#fff" stroke="#666"></rect>
 <path d="M597.5 98.5h14M597.5 102.5h14M602 94.5v12M606.5 94.5v12" stroke="#bbb" fill="none"></path>
 <path d="M601 110l3-4 7-8 2 2-7 8z" fill="#777"></path>
 <path d="M598.5 110.5l3-5 3 2z" fill="#1e8bcd"></path>
 <rect x="597.5" y="117.5" width="14" height="12" fill="#fff" stroke="#666"></rect>
 <path d="M597.5 121.5h14M602 117.5v12" stroke="#bbb" fill="none"></path>
 <rect x="602.5" y="122" width="7" height="6" fill="#9fd4ee"></rect>
 <path d="M601 133l3-4 7-8 2 2-7 8z" fill="#777"></path>
 <path d="M598.5 133.5l3-5 3 2z" fill="#1e8bcd"></path>
 <path d="M770.5 78h5l-2.5 3z" fill="#555"></path>
 <path d="M775 101h5l-2.5 3z" fill="#555"></path>
 <path d="M686.5 124h5l-2.5 3z" fill="#555"></path>
 <!-- cells icons -->
 <g fill="none" stroke="#666" stroke-width="1">
  <rect x="806.5" y="71.5" width="8.5" height="3.5"></rect><path d="M810.75 71.5v3.5"></path>
  <rect x="806.5" y="80.5" width="8.5" height="6"></rect><path d="M806.5 83.5h8.5M810.75 80.5v6"></path>
  <rect x="813.5" y="76.5" width="8" height="3.5"></rect>
  <rect x="806.5" y="94.5" width="8.5" height="3.5"></rect><path d="M810.75 94.5v3.5"></path>
  <rect x="806.5" y="103.5" width="8.5" height="6"></rect><path d="M806.5 106.5h8.5M810.75 103.5v6"></path>
  <rect x="806.5" y="121" width="15" height="11.5"></rect><path d="M806.5 124.5h15M806.5 128h15M811.5 121v11.5M816.5 121v11.5"></path>
 </g>
 <rect x="814.5" y="77" width="7" height="2.5" fill="#aaa"></rect>
 <rect x="810.5" y="98.5" width="4" height="3" fill="#aaa" stroke="#666" stroke-width="1"></rect>
 <path d="M806.5 78.2h6M809.3 75.6l-2.6 2.6 2.6 2.6" stroke="#1e8bcd" fill="none" stroke-width="1.6"></path>
 <path d="M815 98l6 6M821 98l-6 6" stroke="#e86e2f" fill="none" stroke-width="1.5"></path>
 <rect x="811" y="124.5" width="5.5" height="3.5" fill="#1e8bcd"></rect>
 <path d="M807 118.2h12M806.5 116.5v3.5M819.5 116.5v3.5M809 116.8l-2 1.4 2 1.4M817.5 116.8l2 1.4-2 1.4" stroke="#1e8bcd" fill="none" stroke-width="1"></path>
 <path d="M882.5 78h5l-2.5 3z" fill="#555"></path>
 <path d="M878.5 101h5l-2.5 3z" fill="#555"></path>
 <path d="M870.5 124h5l-2.5 3z" fill="#555"></path>
 <!-- editing -->
 <path d="M917 71h14.8v2.2h-10.8l5.6 5.3-5.6 5.2h10.8v2.2H917v-1.6l6.2-5.8-6.2-5.9z" fill="#5f5f5f"></path>
 <path d="M938.8 78h5.2l-2.6 2.9z" fill="#555"></path>
 <path d="M953.6 78l2.4-6.6 2.4 6.6M954.6 76h2.8" fill="none" stroke="#1e8bcd" stroke-width="1.3"></path>
 <text x="953.3" y="86.8" font-family="Liberation Sans" font-size="8" fill="#777" textLength="5.3" lengthAdjust="spacingAndGlyphs">Я</text>
 <path d="M961 76h7.2l-2.6 3v3.9h-2v-3.9z" fill="#5f5f5f"></path>
 <path d="M971.9 78h5.2l-2.6 2.9z" fill="#555"></path>
 <rect x="918.5" y="94.5" width="13" height="15" fill="#fff" stroke="#7f7f6a"></rect>
 <rect x="918.5" y="94.5" width="13" height="3" fill="#7f7f6a"></rect>
 <path d="M925 99.5v7M921.5 103l3.5 3.5 3.5-3.5" stroke="#1e8bcd" fill="none" stroke-width="1.8"></path>
 <path d="M936.8 101.5h5.2l-2.6 2.9z" fill="#555"></path>
 <circle cx="961.6" cy="100.4" r="3.9" fill="none" stroke="#1e8bcd" stroke-width="1.6"></circle>
 <path d="M958.8 103.3l-4.8 4.4" stroke="#1e8bcd" stroke-width="2.4"></path>
 <path d="M971.9 101.5h5.2l-2.6 2.9z" fill="#555"></path>
 <path d="M921 123.9l6-6 4.1 3.5-6 6.5z" fill="#f5b87a"></path>
 <path d="M918.8 125.6l0.8-0.8 4.6 4.6-1.6 1z" fill="#f5b87a"></path>
 <circle cx="926.6" cy="122.5" r="0.7" fill="#e05a20"></circle><circle cx="924.5" cy="124.4" r="0.7" fill="#e05a20"></circle>
 
 <path d="M937 124h5.2l-2.6 3z" fill="#555"></path>
</svg>

<span class="t" style="left: 11.8px; --b: 118.2px; --w: 47px; font-size: 12px; color: rgb(168, 168, 168); top: 108.2px; transform: scaleX(0.9238); transform-origin: 0px 0px;">Вставить</span>
<span class="t" style="left: 6.4px; --b: 153.2px; --w: 76px; font-size: 11px; color: rgb(38, 38, 38); top: 144.2px; transform: scaleX(1.0167); transform-origin: 0px 0px;">Буфер обмена</span>
<span class="t" style="left: 116.5px; --b: 91.6px; --w: 33.7px; font-size: 12.5px; color: rgb(34, 34, 34); top: 81.6px; transform: scaleX(0.951); transform-origin: 0px 0px;">Calibri</span>
<span class="t" style="left: 227.7px; --b: 91.6px; --w: 11px; font-size: 12.5px; color: rgb(34, 34, 34); top: 81.6px; transform: scaleX(0.8472); transform-origin: 0px 0px;">11</span>
<span class="t" style="left: 117.5px; --b: 121.7px; --w: 12.4px; font-size: 12px; color: rgb(102, 102, 102); font-weight: bold; top: 111.7px; transform: scaleX(1.1419); transform-origin: 0px 0px;">Ж</span>
<span class="t" style="left: 140.7px; --b: 121.7px; --w: 9.5px; font-size: 12px; color: rgb(102, 102, 102); font-weight: bold; font-style: italic; top: 111.7px; transform: scaleX(1.2854); transform-origin: 0px 0px;">К</span>
<span class="t" style="left: 163.3px; --b: 121.7px; --w: 9.6px; font-size: 12px; color: rgb(102, 102, 102); font-weight: bold; top: 111.7px; transform: scaleX(1.1378); transform-origin: 0px 0px;">Ч</span>
<span class="t" style="left: 184.3px; --b: 153.2px; --w: 39px; font-size: 11px; color: rgb(38, 38, 38); top: 144.2px; transform: scaleX(1.0773); transform-origin: 0px 0px;">Шрифт</span>
<span class="t" style="left: 357.3px; --b: 153.2px; --w: 79px; font-size: 11px; color: rgb(38, 38, 38); top: 144.2px; transform: scaleX(1.0433); transform-origin: 0px 0px;">Выравнивание</span>
<span class="t" style="left: 503.6px; --b: 83.5px; --w: 40px; font-size: 12.5px; color: rgb(34, 34, 34); top: 73.5px; transform: scaleX(0.9723); transform-origin: 0px 0px;">Общий</span>
<span class="t" style="left: 514.7px; --b: 153.2px; --w: 30.5px; font-size: 11px; color: rgb(38, 38, 38); top: 144.2px; transform: scaleX(0.964); transform-origin: 0px 0px;">Число</span>
<span class="t" style="left: 616.2px; --b: 83.7px; --w: 151px; font-size: 12px; color: rgb(38, 38, 38); top: 73.7px; transform: scaleX(0.989); transform-origin: 0px 0px;">Условное форматирование</span>
<span class="t" style="left: 616.2px; --b: 106.7px; --w: 155.8px; font-size: 12px; color: rgb(38, 38, 38); top: 96.7px; transform: scaleX(0.9978); transform-origin: 0px 0px;">Форматировать как таблицу</span>
<span class="t" style="left: 616.2px; --b: 129.7px; --w: 67.7px; font-size: 12px; color: rgb(38, 38, 38); top: 119.7px; transform: scaleX(0.9774); transform-origin: 0px 0px;">Стили ячеек</span>
<span class="t" style="left: 674.6px; --b: 153.2px; --w: 31px; font-size: 11px; color: rgb(38, 38, 38); top: 144.2px; transform: scaleX(0.9778); transform-origin: 0px 0px;">Стили</span>
<span class="t" style="left: 825.4px; --b: 83.7px; --w: 47.5px; font-size: 12px; color: rgb(38, 38, 38); top: 73.7px; transform: scaleX(0.9337); transform-origin: 0px 0px;">Вставить</span>
<span class="t" style="left: 825.4px; --b: 106.7px; --w: 43.4px; font-size: 12px; color: rgb(38, 38, 38); top: 96.7px; transform: scaleX(0.947); transform-origin: 0px 0px;">Удалить</span>
<span class="t" style="left: 825.4px; --b: 129.7px; --w: 42.6px; font-size: 12px; color: rgb(38, 38, 38); top: 119.7px; transform: scaleX(0.999); transform-origin: 0px 0px;">Формат</span>
<span class="t" style="left: 827px; --b: 153.2px; --w: 39.4px; font-size: 11px; color: rgb(38, 38, 38); top: 144.2px; transform: scaleX(1.0676); transform-origin: 0px 0px;">Ячейки</span>
<span class="t" style="left: 905px; --b: 153.2px; --w: 86px; font-size: 11px; color: rgb(38, 38, 38); top: 144.2px; transform: scaleX(1.0263); transform-origin: 0px 0px;">Редактирование</span>
<!-- title bar -->
<svg class="a" style="left:0;top:0" width="1028" height="35">
 <path d="M24 12h12v11.7h-12z" fill="none" stroke="#fff" stroke-width="2"></path>
 <rect x="23" y="17" width="14" height="2.6" fill="#fff"></rect>
 <rect x="28" y="19" width="2.2" height="3.5" fill="#fff"></rect>
 <path d="M57.5 11.5l-5 4.5 5 4.5" fill="none" stroke="#fff" stroke-width="2"></path>
 <path d="M53 16h7.8a4.2 4.2 0 0 1 0 8.4h-1.8" fill="none" stroke="#fff" stroke-width="2"></path>
 <path d="M71 16.5h5l-2.5 3z" fill="#fff"></path>
 <path d="M95.5 11.5l5 4.5-5 4.5" fill="none" stroke="#2fa36a" stroke-width="2"></path>
 <path d="M100 16h-7.8a4.2 4.2 0 0 0 0 8.4h1.8" fill="none" stroke="#2fa36a" stroke-width="2"></path>
 <path d="M106 16.5h5l-2.5 3z" fill="#2fa36a"></path>
 <rect x="126" y="14.5" width="5" height="1.2" fill="#fff"></rect>
 <path d="M126 17.5h5l-2.5 3z" fill="#fff"></path>
 <rect x="786" y="7" width="47" height="19" rx="2" fill="#fff"></rect>
 <g fill="none" stroke="#fff" stroke-width="1.1">
  <rect x="859.5" y="11.5" width="12" height="9"></rect>
  <path d="M859.5 14.5h12"></path>
  <path d="M865.5 20.5v-5M863.3 17.5l2.2-2.2 2.2 2.2"></path>
  <path d="M907 16.5h11"></path>
  <rect x="953.5" y="11.5" width="9" height="9.5"></rect>
  <path d="M998.5 11l10.5 10.5M1009 11l-10.5 10.5"></path>
 </g>
</svg>
<span class="t" style="left: 461.4px; --b: 22px; --w: 60.3px; font-size: 12.5px; color: rgb(255, 255, 255); -webkit-text-stroke: 0px; top: 12px; transform: scaleX(0.9392); transform-origin: 0px 0px;">Вычитание</span>
<span class="t" style="left: 528.3px; --b: 22px; --w: 3.4px; font-size: 12.5px; color: rgb(255, 255, 255); -webkit-text-stroke: 0px; top: 12px; transform: scaleX(0.815); transform-origin: 0px 0px;">-</span>
<span class="t" style="left: 539.6px; --b: 22px; --w: 24.9px; font-size: 12.5px; color: rgb(255, 255, 255); -webkit-text-stroke: 0px; top: 12px; transform: scaleX(0.8143); transform-origin: 0px 0px;">Excel</span>
<span class="t" style="left: 797.4px; --b: 21px; --w: 24.4px; font-size: 12.5px; color: rgb(0, 116, 66); top: 11px; transform: scaleX(0.8628); transform-origin: 0px 0px;">Вход</span>
<!-- tabs -->
<div class="a" style="left:62px;top:35px;width:69px;height:30px;background:#f3f3f3"></div>
<span class="t" style="left: 16.4px; --b: 54px; --w: 28.6px; font-size: 12.5px; color: rgb(255, 255, 255); -webkit-text-stroke: 0px; top: 44px; transform: scaleX(0.9306); transform-origin: 0px 0px;">Файл</span>
<span class="t" style="left: 74.6px; --b: 54px; --w: 43px; font-size: 12.5px; color: rgb(13, 112, 64); -webkit-text-stroke: 0.1px currentcolor; top: 44px; transform: scaleX(0.9038); transform-origin: 0px 0px;">Главная</span>
<span class="t" style="left: 145.4px; --b: 54px; --w: 41.8px; font-size: 12.5px; color: rgb(255, 255, 255); -webkit-text-stroke: 0px; top: 44px; transform: scaleX(0.8995); transform-origin: 0px 0px;">Вставка</span>
<span class="t" style="left: 213.7px; --b: 54px; --w: 105.8px; font-size: 12.5px; color: rgb(255, 255, 255); -webkit-text-stroke: 0px; top: 44px; transform: scaleX(0.9329); transform-origin: 0px 0px;">Разметка страницы</span>
<span class="t" style="left: 346px; --b: 54px; --w: 53.2px; font-size: 12.5px; color: rgb(255, 255, 255); -webkit-text-stroke: 0px; top: 44px; transform: scaleX(0.9778); transform-origin: 0px 0px;">Формулы</span>
<span class="t" style="left: 425.8px; --b: 54px; --w: 43px; font-size: 12.5px; color: rgb(255, 255, 255); -webkit-text-stroke: 0px; top: 44px; transform: scaleX(0.9519); transform-origin: 0px 0px;">Данные</span>
<span class="t" style="left: 495.4px; --b: 54px; --w: 90.5px; font-size: 12.5px; color: rgb(255, 255, 255); -webkit-text-stroke: 0px; top: 44px; transform: scaleX(0.9375); transform-origin: 0px 0px;">Рецензирование</span>
<span class="t" style="left: 612.6px; --b: 54px; --w: 19px; font-size: 12.5px; color: rgb(255, 255, 255); -webkit-text-stroke: 0px; top: 44px; transform: scaleX(0.8398); transform-origin: 0px 0px;">Вид</span>
<span class="t" style="left: 658.9px; --b: 54px; --w: 69.5px; font-size: 12.5px; color: rgb(255, 255, 255); -webkit-text-stroke: 0px; top: 44px; transform: scaleX(0.9533); transform-origin: 0px 0px;">Разработчик</span>
<span class="t" style="left: 754.6px; --b: 54px; --w: 44.8px; font-size: 12.5px; color: rgb(255, 255, 255); -webkit-text-stroke: 0px; top: 44px; transform: scaleX(0.9134); transform-origin: 0px 0px;">Справка</span>
<span class="t" style="left: 850px; --b: 54px; --w: 49px; font-size: 12.5px; color: rgb(255, 255, 255); -webkit-text-stroke: 0px; top: 44px; transform: scaleX(1.0067); transform-origin: 0px 0px;">Помощн</span>
<span class="t" style="left: 938.3px; --b: 54px; --w: 64.2px; font-size: 12.5px; color: rgb(255, 255, 255); -webkit-text-stroke: 0px; top: 44px; transform: scaleX(0.93); transform-origin: 0px 0px;">Поделиться</span>
<svg class="a" style="left:0;top:35px" width="1028" height="30">
 <g fill="none" stroke="#fff" stroke-width="1.1">
  <path d="M827.5 18.5c-1.8-1.8-2.7-3.6-2.7-5.6a5.6 5.6 0 0 1 11.2 0c0 2-0.9 3.8-2.7 5.6v2.5h-5.8z"></path>
  <path d="M828.5 23.3h4"></path>
  <circle cx="925.8" cy="11.8" r="4.6"></circle>
  <path d="M919.2 22.8c0.6-3.5 3-6 6.8-6.2"></path>
  <path d="M927.5 19.5h6M930.5 16.2v6.5" stroke-width="1.3"></path>
 </g>
</svg>
<div class="a lb"></div><div class="a rb"></div><div class="a bb"></div>

</body></html>
